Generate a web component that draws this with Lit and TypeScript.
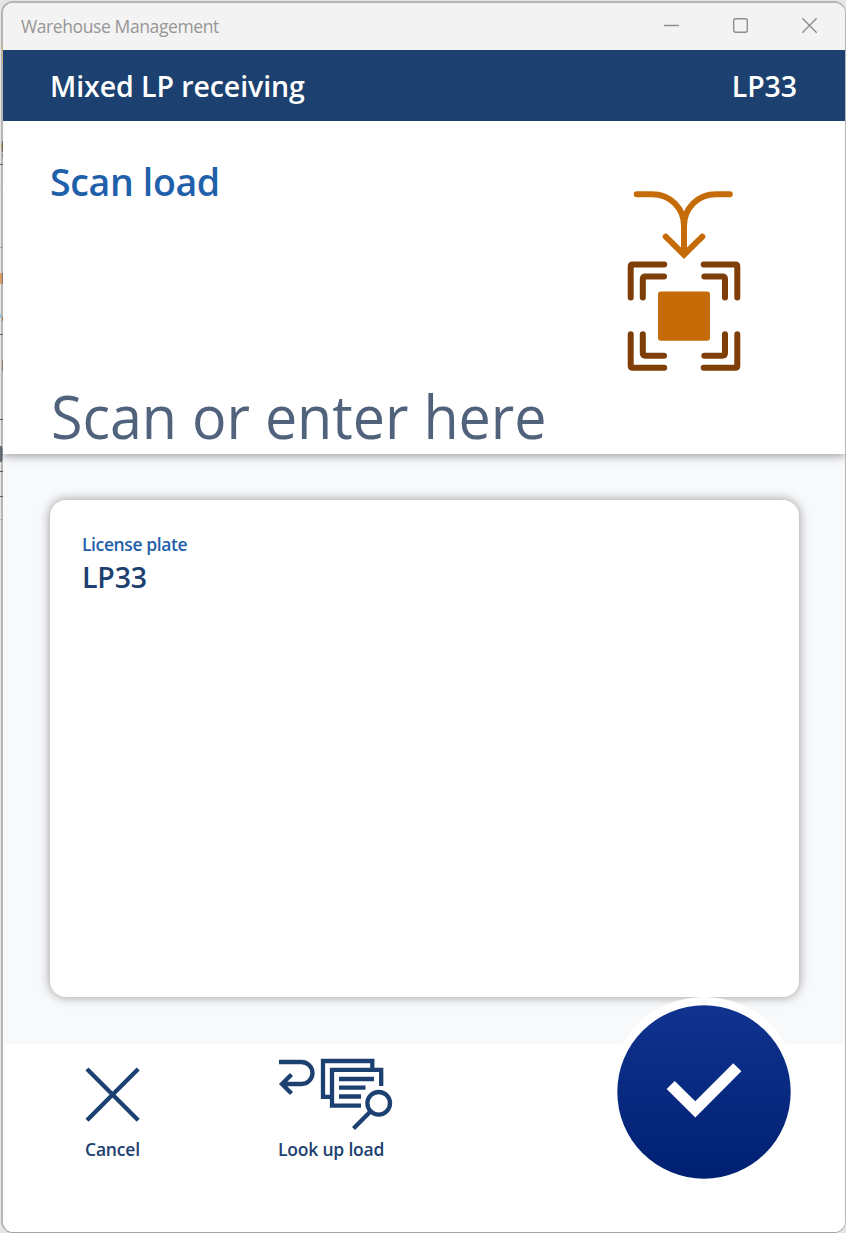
import { LitElement, html, css, svg } from "lit";
import { customElement, property } from "lit/decorators.js";

// Slivers of the desktop that show through beside the window's left edge: [y, height, x, width, colour]
const slivers: [number, number, number, number, string][] = [
  [44, 21, 2, 1, "#cdb27c"], [141, 11, 2, 1, "#6b5a45"], [144, 5, 1, 1, "#a89a55"], [154, 3, 2, 1, "#8b7a6b"],
  [164, 1, 0, 3, "#555"], [187, 1, 0, 3, "#c4c4c4"], [247, 1, 0, 3, "#999"],
  [273, 11, 0, 2, "#d9944f"], [273, 11, 2, 1, "#71717a"], [314, 4, 0, 1, "#7cc4ea"], [316, 5, 2, 1, "#a5714c"],
  [334, 1, 0, 3, "#555"], [360, 11, 2, 1, "#94765e"], [419, 1, 0, 3, "#444"],
  [446, 16, 0, 2, "#55555a"], [448, 12, 2, 1, "#6f8ba3"], [471, 1, 0, 3, "#444"], [496, 1, 0, 3, "#444"],
  [519, 1, 0, 3, "#aaa"],
];

@customElement("title-bar")
export class TitleBar extends LitElement {
  static styles = css`
    :host { display: flex; height: 47px; background: #f3f3f3; align-items: center; justify-content: space-between; padding: 0 25px 2px 18px; box-sizing: border-box; }
    .name { font-size: 17.5px; line-height: 24px; color: #969696; letter-spacing: -0.4px; }
    .controls { display: flex; gap: 48px; }
    svg { display: block; fill: none; stroke: #8e8e8e; stroke-width: 1.4; }
  `;
  render() {
    return html`
      <span class="name">Warehouse Management</span>
      <div class="controls">
        <svg width="21" height="20"><path d="M3 9.5H18" /></svg>
        <svg width="21" height="20"><rect x="3.7" y="2.7" width="13.6" height="13.6" rx="2" /></svg>
        <svg width="21" height="20"><path d="M3.3 2.3L17.7 16.7M17.7 2.3L3.3 16.7" /></svg>
      </div>`;
  }
}

@customElement("scan-icon")
export class ScanIcon extends LitElement {
  static styles = css`
    :host { display: block; }
    svg { display: block; }
    .arrow, .frame { fill: none; stroke-width: 6; stroke-linecap: round; }
    .arrow { stroke: #c56b08; }
    .frame { stroke: #7e3e08; stroke-linejoin: round; }
    .box { fill: #c56b08; }
  `;
  render() {
    return html`<svg width="120" height="190" viewBox="624 185 120 190">
      <path class="arrow" d="M636.7 194.3H652C670 194.3 684 208 684 226V254M729.8 194.3H716C698 194.3 684 208 684 226M665.7 236.7L684 254.7L702.3 236.7" />
      <path class="frame" d="M630.7 297.6V266.4Q630.7 264.4 632.7 264.4H664.2M642.8 297.6V279Q642.8 276.4 645.4 276.4H664M703.7 264.4H735.3Q737.3 264.4 737.3 266.4V297.6M704.3 276.4H722.5Q725 276.4 725 279V297.6M630.7 334.2V365.8Q630.7 367.8 632.7 367.8H664.2M642.8 334.2V353Q642.8 355.7 645.4 355.7H664M703.7 367.8H735.3Q737.3 367.8 737.3 365.8V334.2M704.3 355.7H722.5Q725 355.7 725 353V334.2" />
      <rect class="box" x="658" y="291.5" width="52" height="49.3" rx="3" />
    </svg>`;
  }
}

@customElement("footer-action")
export class FooterAction extends LitElement {
  @property() label = "";
  static styles = css`
    :host { display: flex; flex-direction: column; }
    .label { font-size: 17.5px; line-height: 24px; font-weight: 600; color: #1c406f; white-space: nowrap; letter-spacing: -0.2px; }
  `;
  render() {
    return html`<slot></slot><span class="label">${this.label}</span>`;
  }
}

@customElement("app-root")
export class AppRoot extends LitElement {
  static styles = css`
    :host { display: block; position: relative; height: 1233px; overflow: hidden; background: #e6e5e3; font-family: "Open Sans", "Noto Sans", sans-serif; box-sizing: border-box; padding: 1px 0 0 1px; }
    .slivers { position: absolute; left: 0; top: 0; }
    .window { display: flex; flex-direction: column; box-sizing: border-box; height: 1232px; border: solid #b6b6b5; border-width: 2px 1px 1px 2px; border-bottom-color: #a2a2a2; border-radius: 12px; overflow: hidden; background: #fff; }
    .header { position: relative; z-index: 2; display: flex; justify-content: space-between; align-items: center; box-sizing: border-box; height: 71px; padding: 0 48px 0 47px; background: #1c406f; color: #fff; font-size: 28.5px; font-weight: 600; letter-spacing: -0.08px; }
    .scan { position: relative; z-index: 1; display: grid; grid-template-columns: 1fr 120px; box-sizing: border-box; height: 333px; padding: 0 101px 0 47px; box-shadow: 0 2px 9px rgba(0, 0, 0, 0.38); background: #fff; }
    .prompt { display: flex; flex-direction: column; justify-content: space-between; align-items: flex-start; white-space: nowrap; }
    .title { margin-top: 34px; font-size: 37.5px; line-height: 54px; font-weight: 600; color: #1f60ab; letter-spacing: -0.35px; }
    .entry { margin-left: 1px; font-size: 61px; line-height: 76px; color: #51627c; transform: scaleX(0.941); transform-origin: left; }
    .glyph { margin-top: 64px; }
    .body { height: 590px; box-sizing: border-box; padding: 46px 46px 47px 47px; background: #f8f9fb; }
    .card { box-sizing: border-box; height: 497px; border-radius: 16px; background: #fff; padding: 32px; box-shadow: 0 0 11px rgba(0, 0, 0, 0.4); }
    .field { font-size: 17.5px; line-height: 24px; font-weight: 600; color: #1f60ab; letter-spacing: -0.4px; }
    .value { font-size: 28.5px; line-height: 42px; font-weight: 600; color: #1c406f; letter-spacing: -0.15px; }
    .footer { position: relative; display: flex; flex: 1; background: #fff; }
    .cancel { margin: 10px 0 0 82px; width: 193px; }
    .lookup { margin-top: 10px; }
    .icon { display: block; height: 83px; fill: none; stroke: #1c406f; stroke-width: 4.3; }
    .confirm { position: absolute; right: 46px; top: -47px; width: 190px; height: 190px; display: block; z-index: 2; }
  `;

  render() {
    return html`
      <div class="window">
        <title-bar></title-bar>
        <div class="header"><span class="heading">Mixed LP receiving</span><span class="plate">LP33</span></div>
        <div class="scan">
          <div class="prompt">
            <span class="title">Scan load</span>
            <span class="entry">Scan or enter here</span>
          </div>
          <scan-icon class="glyph"></scan-icon>
        </div>
        <div class="body">
          <div class="card">
            <div class="field">License plate</div>
            <div class="value">LP33</div>
          </div>
        </div>
        <div class="footer">
          <footer-action class="cancel" label="Cancel">
            <svg class="icon" width="60" height="83" viewBox="85 1054 60 83"><path d="M87 1069L138.2 1120.2M138.2 1069L87 1120.2" /></svg>
          </footer-action>
          <footer-action class="lookup" label="Look up load">
            <svg class="icon" width="120" height="83" viewBox="278 1054 120 83">
              <path d="M279 1062H301.5A10.8 10.8 0 0 1 301.5 1084H282M291.5 1074.5L282 1084L291.5 1093.5" />
              <path d="M372.3 1068V1061H323V1096.8H331M381.2 1086V1069.8H332V1105.6H361M339 1079H374M339 1087.7H365.5M339 1096.5H361" />
              <circle cx="378.7" cy="1103.3" r="11.3" />
              <path d="M370.7 1111.3L353.5 1128.5" />
            </svg>
          </footer-action>
          <svg class="confirm" viewBox="609 997 190 190">
            <defs><linearGradient id="blue" x1="0" y1="0" x2="0" y2="1"><stop offset="0" stop-color="#10338f" /><stop offset="1" stop-color="#002072" /></linearGradient></defs>
            <circle cx="704" cy="1092" r="95" fill="#fff" />
            <circle cx="704" cy="1092" r="86.7" fill="url(#blue)" />
            <path d="M670.7 1085L695.3 1109.3L737.3 1067.3" fill="none" stroke="#fff" stroke-width="11.5" />
          </svg>
        </div>
      </div>
      <svg class="slivers" width="3" height="1233">
        ${slivers.map(([y, h, x, w, c]) => svg`<rect x=${x} y=${y} width=${w} height=${h} fill=${c} fill-opacity=".85" />`)}
      </svg>`;
  }
}
